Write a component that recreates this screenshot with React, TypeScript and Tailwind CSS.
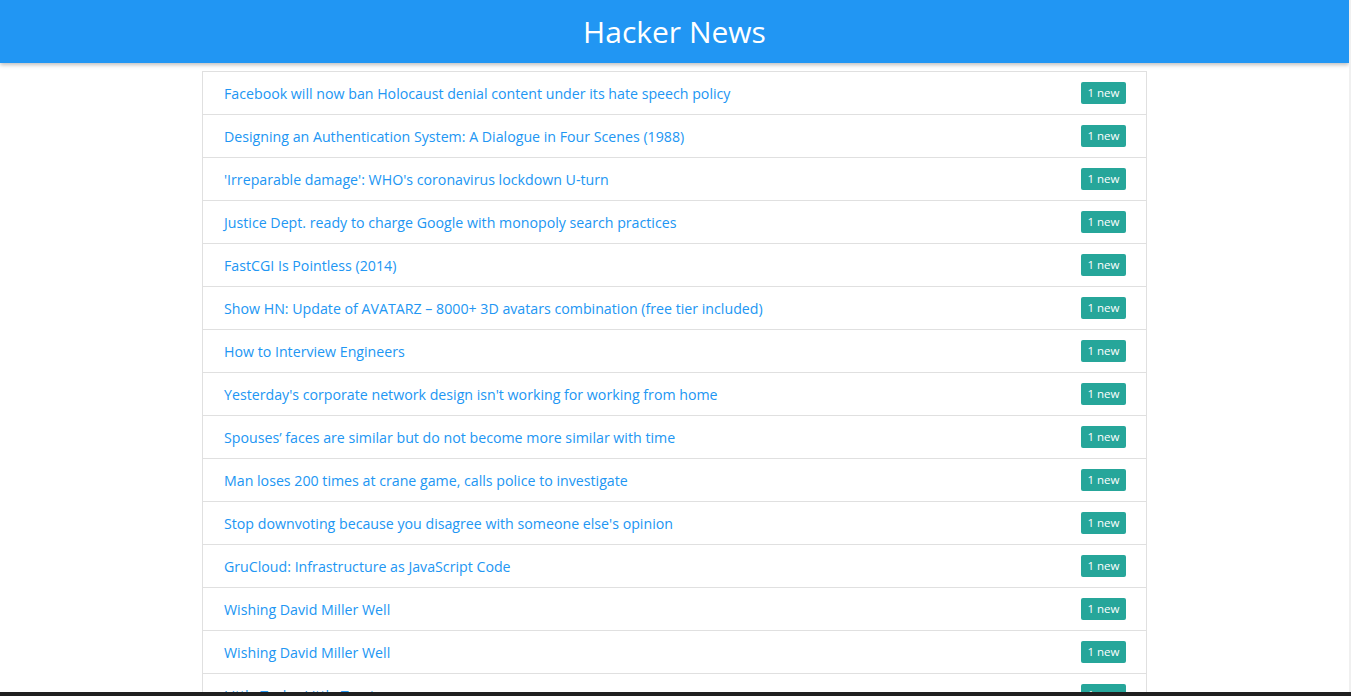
const stories = [
  'Facebook will now ban Holocaust denial content under its hate speech policy',
  'Designing an Authentication System: A Dialogue in Four Scenes (1988)',
  "'Irreparable damage': WHO's coronavirus lockdown U-turn",
  'Justice Dept. ready to charge Google with monopoly search practices',
  'FastCGI Is Pointless (2014)',
  'Show HN: Update of AVATARZ – 8000+ 3D avatars combination (free tier included)',
  'How to Interview Engineers',
  "Yesterday's corporate network design isn't working for working from home",
  'Spouses’ faces are similar but do not become more similar with time',
  'Man loses 200 times at crane game, calls police to investigate',
  "Stop downvoting because you disagree with someone else's opinion",
  'GruCloud: Infrastructure as JavaScript Code',
  'Wishing David Miller Well',
  'Wishing David Miller Well',
  'Little Tasks, Little Trust',
  'The Raspberry Pi 4 Compute Module',
]

export default function App() {
  return (
    <div className="min-h-screen bg-white font-['Open_Sans',sans-serif] mr-[2px]">
      <header className="h-[63px] bg-[#2196f3] shadow-[0_2px_4px_rgba(0,0,0,0.25)] flex items-center justify-center">
        <h1 className="text-white text-[30px] leading-none">Hacker News</h1>
      </header>
      <ul className="mx-auto mt-2 w-[945px] border border-[#e0e0e0]">
        {stories.map((title, i) => (
          <li
            key={i}
            className="h-[43px] flex items-center justify-between pl-[21px] pr-[20px] border-b border-[#e0e0e0] last:border-b-0"
          >
            <a className="pt-[2px] text-[#2196f3] text-[14.2px] cursor-pointer">{title}</a>
            <span className="h-[22px] w-[45px] flex items-center justify-center rounded-[2px] bg-[#26a69a] text-white text-[11.5px]">
              1 new
            </span>
          </li>
        ))}
      </ul>
      <div className="fixed top-0 bottom-0 right-0 w-[2px] bg-[#f0f0f0]" />
      <div className="fixed bottom-0 left-0 right-0 h-[4px] bg-[#202020]" />
    </div>
  )
}
